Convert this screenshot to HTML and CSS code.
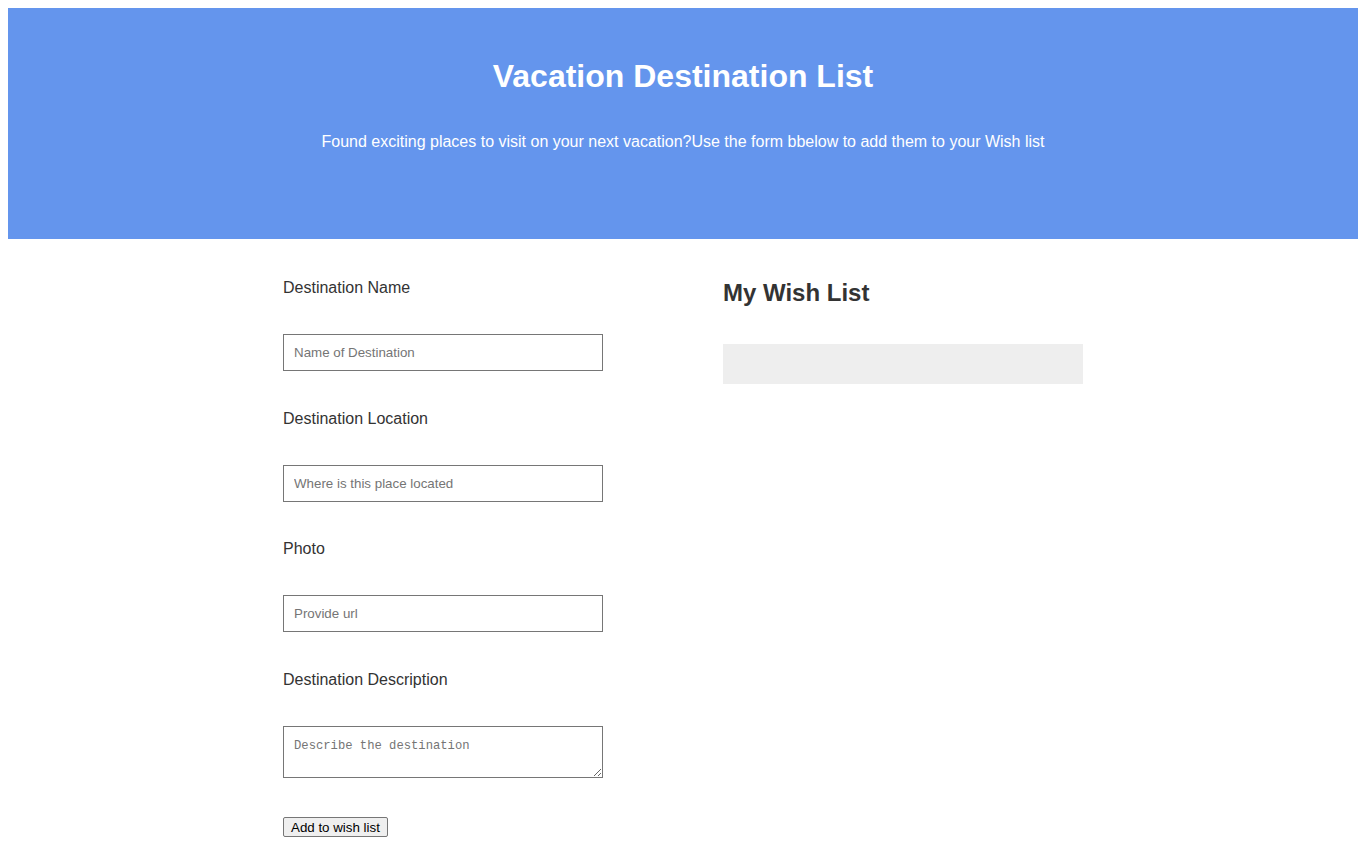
FILE: index.html
```html
<!DOCTYPE html>
<html>
<head>
<meta charset="utf-8">
<title>Vacation Destination List</title>
<link rel="stylesheet" href="styles.css">
</head>
<body>
<header class="hero">
  <h1 class="hero-title">Vacation Destination List</h1>
  <p class="hero-sub">Found exciting places to visit on your next vacation?Use the form bbelow to add them to your Wish list</p>
</header>
<main class="content">
  <form class="dest-form">
    <div class="field">
      <label class="field-label" for="name">Destination Name</label>
      <input class="field-input" id="name" type="text" placeholder="Name of Destination">
    </div>
    <div class="field">
      <label class="field-label" for="loc">Destination Location</label>
      <input class="field-input" id="loc" type="text" placeholder="Where is this place located">
    </div>
    <div class="field">
      <label class="field-label" for="photo">Photo</label>
      <input class="field-input" id="photo" type="text" placeholder="Provide url">
    </div>
    <div class="field">
      <label class="field-label" for="desc">Destination Description</label>
      <textarea class="field-area" id="desc" placeholder="Describe the destination"></textarea>
    </div>
    <button class="add-btn" type="button">Add to wish list</button>
  </form>
  <section class="wish">
    <h2 class="wish-title">My Wish List</h2>
    <div class="wish-box"></div>
  </section>
</main>
</body>
</html>
```
FILE: styles.css
```css
body {
  margin: 8px;
  font-family: "Liberation Sans", Arial, sans-serif;
  color: #333;
}
.hero {
  background: #6495ed;
  color: #fff;
  text-align: center;
  height: 231px;
  box-sizing: border-box;
  padding-top: 50px;
}
.hero-title {
  margin: 0;
  font-size: 32px;
  line-height: 37px;
  font-weight: bold;
}
.hero-sub {
  margin: 38px 0 0;
  font-size: 16px;
  line-height: 18px;
}
.content {
  display: flex;
  width: 800px;
  margin: 0 auto;
  padding-top: 40px;
}
.dest-form {
  width: 440px;
  display: flex;
  flex-direction: column;
  align-items: flex-start;
}
.field {
  display: flex;
  flex-direction: column;
  margin-bottom: 38.7px;
}
.field-label {
  font-size: 16px;
  line-height: 18px;
  margin-bottom: 37px;
}
.field-input {
  width: 320px;
  height: 37px;
  box-sizing: border-box;
  border: 1px solid #767676;
  padding: 0 10px;
  font-family: "Liberation Sans", Arial, sans-serif;
  font-size: 13.33px;
  color: #333;
}
.field-input::placeholder {
  color: #757575;
}
.field-area {
  width: 320px;
  height: 52px;
  box-sizing: border-box;
  border: 1px solid #767676;
  padding: 12px 10px 8px;
  font-family: "Liberation Mono", monospace;
  font-size: 12.2px;
}
.field-area::placeholder {
  color: #757575;
}
.add-btn {
  margin-top: 0;
  font-family: "Liberation Sans", Arial, sans-serif;
  font-size: 13.33px;
  color: #000;
  background: #efefef;
  border: 1px solid #767676;
  border-radius: 2px;
  padding: 2px 7px 1px;
}
.wish {
  width: 360px;
}
.wish-title {
  margin: 0;
  font-size: 24px;
  line-height: 28px;
}
.wish-box {
  height: 40px;
  background: #eee;
  margin-top: 37px;
}
```
